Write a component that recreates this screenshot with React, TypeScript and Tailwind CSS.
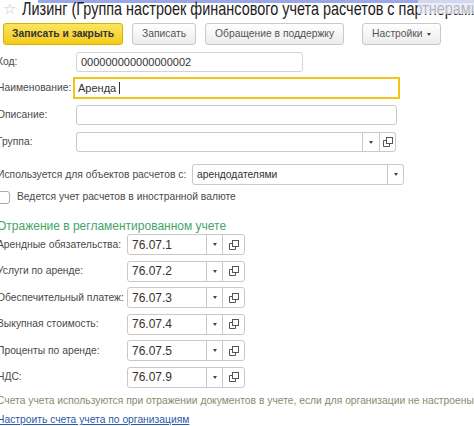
import React from "react";

const ACCOUNTS = [
  { label: "Арендные обязательства:", value: "76.07.1" },
  { label: "Услуги по аренде:", value: "76.07.2" },
  { label: "Обеспечительный платеж:", value: "76.07.3" },
  { label: "Выкупная стоимость:", value: "76.07.4" },
  { label: "Проценты по аренде:", value: "76.07.5" },
  { label: "НДС:", value: "76.07.9" },
];

function OpenIcon() {
  return (
    <svg width="10" height="10" viewBox="0 0 10 10" fill="none" stroke="#555" strokeWidth="1">
      <rect x="3.5" y="0.5" width="6" height="6" />
      <path d="M0.5 3.5 H3.5 M0.5 3.5 V9.5 H6.5 V6.5" />
    </svg>
  );
}

function Arrow() {
  return <span className="block w-0 h-0 border-l-[2.5px] border-r-[2.5px] border-t-[3px] border-l-transparent border-r-transparent border-t-[#444]" />;
}

function Btn({ children, primary }: { children: React.ReactNode; primary?: boolean }) {
  return (
    <div
      className={
        primary
          ? "h-[22px] flex items-center rounded-[3px] border border-[#d8b200] bg-gradient-to-b from-[#fbe55c] to-[#f3cb12] px-[8px] font-bold text-[#333]"
          : "h-[22px] flex items-center rounded-[3px] border border-[#c9c9c9] bg-gradient-to-b from-white to-[#ececec] px-[9px] text-[#555]"
      }
    >
      {children}
    </div>
  );
}

export default function App() {
  return (
    <div className="relative w-[474px] h-[426px] overflow-hidden bg-white text-[10.3px] text-[#4a4a4a]" style={{ fontFamily: '"Liberation Sans", Arial, sans-serif' }}>
      {/* window header strip */}
      <div className="absolute top-0 left-[38px] right-0 h-[3px] bg-[#9aa7e6]" />

      <div className="flex items-center h-[21px] -mt-[2px] pl-[3px]">
        <span className="text-[#c8c8c8] text-[15px] leading-none mr-[6px]">☆</span>
        <span className="text-[19px] text-[#222] whitespace-nowrap leading-none origin-left scale-x-[0.76]">Лизинг (Группа настроек финансового учета расчетов с партнерами)</span>
      </div>
      <div className="absolute top-0 left-[418px] w-[56px] h-[14px] bg-[#e4e7f3]/75" />

      <div className="flex items-center mt-[4px] pl-[3px] whitespace-nowrap">
        <Btn primary>Записать и закрыть</Btn>
        <div className="ml-[9px]"><Btn>Записать</Btn></div>
        <div className="ml-[9px]"><Btn>Обращение в поддержку</Btn></div>
        <div className="ml-[18px]">
          <Btn>
            Настройки <span className="ml-[4px]"><Arrow /></span>
          </Btn>
        </div>
      </div>

      <div className="-ml-[3px] mt-[7px]">
        <div className="flex items-center h-[20px]">
          <span className="w-[79px]">Код:</span>
          <div className="w-[227px] h-[20px] border border-[#d3d3d3] rounded-[3px] flex items-center px-[4px] text-[11px] text-[#333]">000000000000000002</div>
        </div>
        <div className="flex items-center h-[22px] mt-[5px]">
          <span className="w-[76px]">Наименование:</span>
          <div className="w-[327px] h-[22px] border-2 border-[#f5c516] flex items-center px-[3px] text-[11px] text-[#333]">
            Аренда <span className="ml-[3px] w-px h-[12px] bg-[#333]" />
          </div>
        </div>
        <div className="flex items-center h-[20px] mt-[6px]">
          <span className="w-[79px]">Описание:</span>
          <div className="w-[321px] h-[20px] border border-[#c9c9c9] rounded-[3px]" />
        </div>
        <div className="flex items-center h-[20px] mt-[7px]">
          <span className="w-[79px]">Группа:</span>
          <div className="w-[320px] h-[20px] border border-[#c9c9c9] rounded-[3px] flex">
            <div className="flex-1" />
            <div className="w-[17px] border-l border-[#c9c9c9] flex items-center justify-center"><Arrow /></div>
            <div className="w-[16px] border-l border-[#c9c9c9] flex items-center justify-center"><OpenIcon /></div>
          </div>
        </div>

        <div className="flex items-center h-[21px] mt-[12px]">
          <span className="w-[195px] whitespace-nowrap">Используется для объектов расчетов с:</span>
          <div className="w-[212px] h-[21px] border border-[#c9c9c9] rounded-[3px] flex">
            <div className="flex-1 flex items-center px-[4px] text-[#333]">арендодателями</div>
            <div className="w-[16px] border-l border-[#c9c9c9] flex items-center justify-center"><Arrow /></div>
          </div>
        </div>

        <div className="flex items-center h-[14px] mt-[5px]">
          <div className="w-[13px] h-[13px] border border-[#a9a9a9] rounded-[3px]" />
          <span className="ml-[7px]">Ведется учет расчетов в иностранной валюте</span>
        </div>

        <div className="mt-[15px] text-[12px] leading-[14px] text-[#45a468] whitespace-nowrap">Отражение в регламентированном учете</div>

        <div className="mt-[1px]">
          {ACCOUNTS.map((a) => (
            <div key={a.value} className="flex items-center h-[21px] mb-[5.5px]">
              <span className="w-[130px] whitespace-nowrap">{a.label}</span>
              <div className="w-[118px] h-[21px] border border-[#c9c9c9] rounded-[3px] flex">
                <div className="flex-1 flex items-center px-[4px] text-[12px] text-[#333]">{a.value}</div>
                <div className="w-[16px] border-l border-[#c9c9c9] flex items-center justify-center"><Arrow /></div>
                <div className="w-[22px] border-l border-[#c9c9c9] flex items-center justify-center"><OpenIcon /></div>
              </div>
            </div>
          ))}
        </div>

        <div className="mt-[3px] text-[#8a8a6e] whitespace-nowrap">
          Счета учета используются при отражении документов в учете, если для организации не настроены.
        </div>
        <div className="mt-[4px] text-[#2c5aa6] underline whitespace-nowrap">Настроить счета учета по организациям</div>
      </div>
    </div>
  );
}
